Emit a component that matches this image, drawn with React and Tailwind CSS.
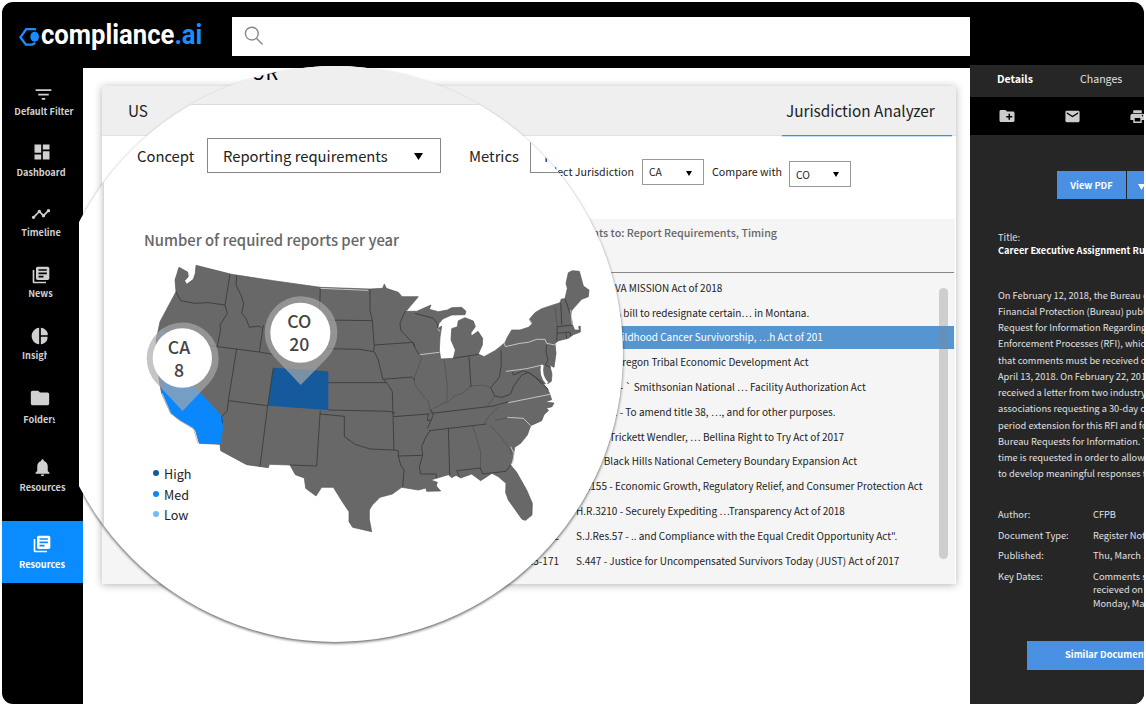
import React from "react";
import {
  MdFilterList, MdDashboard, MdTimeline, MdLibraryBooks, MdPieChart, MdFolder,
  MdNotifications, MdCreateNewFolder, MdEmail, MdPrint,
} from "react-icons/md";

const NAV = [
  { Icon: MdFilterList, label: "Default Filter", box: "h-[58px] pl-[3px]", text: "-mt-[0.5px]", icon: "pr-[2px]", size: 21 },
  { Icon: MdDashboard, label: "Dashboard", box: "h-[62px] pr-[3px]", text: "mt-[3px]", icon: "pl-[2px]", size: 20 },
  { Icon: MdTimeline, label: "Timeline", box: "h-[61px] pr-[3px]", text: "mt-[1px]", icon: "", size: 20 },
  { Icon: MdLibraryBooks, label: "News", box: "h-[61px] pr-[4px]", text: "mt-[1px]", icon: "", size: 20 },
  { Icon: MdPieChart, label: "Insights", box: "h-[62px] pr-[5px]", text: "mt-[2px]", icon: "", size: 20 },
  { Icon: MdFolder, label: "Folders", box: "h-[69px] pr-[5px]", text: "mt-[4px]", icon: "", size: 22 },
  { Icon: MdNotifications, label: "Resources", box: "h-[64px]", text: "mt-[3px]", icon: "", size: 21 },
];

const ROWS = [
  ["", "S.2372 - VA MISSION Act of 2018"],
  ["", "S.1117 - A bill to redesignate certain… in Montana."],
  ["", "S.292 - Childhood Cancer Survivorship, …h Act of 201"],
  ["", "S.1285 - Oregon Tribal Economic Development Act"],
  ["", "H.R.4009 - ` Smithsonian National … Facility Authorization Act"],
  ["", "H.R.3562 - To amend title 38, …, and for other purposes."],
  ["", "S.204 - Trickett Wendler, … Bellina Right to Try Act of 2017"],
  ["", "S.35 - Black Hills National Cemetery Boundary Expansion Act"],
  ["", "S.2155 - Economic Growth, Regulatory Relief, and Consumer Protection Act"],
  ["", "H.R.3210 - Securely Expediting …Transparency Act of 2018"],
  ["115-172", "S.J.Res.57 - .. and Compliance with the Equal Credit Opportunity Act\"."],
  ["115-171", "S.447 - Justice for Uncompensated Survivors Today (JUST) Act of 2017"],
];

const SUMMARY = [
  "On February 12, 2018, the Bureau of",
  "Financial Protection (Bureau) published",
  "Request for Information Regarding",
  "Enforcement Processes (RFI), which",
  "that comments must be received on",
  "April 13, 2018. On February 22, 2018",
  "received a letter from two industry",
  "associations requesting a 30-day comment",
  "period extension for this RFI and for",
  "Bureau Requests for Information. The",
  "time is requested in order to allow",
  "to develop meaningful responses to",
];

const COUNTRY =
  "M117 52 L143 66 L145 80 L134 92 L140 103 L160 88 L166 70 L168 46 L275 73 L400 92 L541 112 L690 117 L728 115 L733 102 L739 115 L775 127 L786 140 L835 140 L798 184 L830 184 L873 165 L868 178 L895 185 L922 180 L935 173 L965 172 L978 184 L975 194 L935 195 L908 207 L896 222 L893 236 L905 228 L900 262 L898 300 L902 327 L940 325 L946 300 L933 270 L935 236 L952 230 L955 212 L975 203 L1000 213 L1006 230 L993 248 L994 258 L1014 244 L1028 265 L1027 285 L1015 312 L1032 320 L1065 302 L1095 278 L1102 262 L1115 240 L1140 240 L1165 232 L1176 222 L1168 208 L1185 188 L1205 176 L1260 158 L1264 147 L1275 146 L1282 115 L1278 100 L1285 68 L1297 62 L1318 64 L1330 108 L1347 120 L1345 140 L1325 148 L1296 180 L1292 195 L1298 225 L1304 240 L1318 240 L1316 229 L1321 229 L1321 246 L1300 254 L1285 265 L1256 272 L1245 280 L1248 310 L1242 352 L1229 345 L1236 372 L1234 394 L1226 400 L1208 402 L1222 414 L1230 434 L1235 449 L1215 456 L1242 459 L1236 470 L1218 475 L1226 481 L1212 494 L1205 512 L1172 527 L1162 555 L1142 580 L1124 592 L1119 625 L1112 645 L1130 667 L1160 720 L1177 760 L1176 795 L1157 811 L1146 808 L1132 788 L1105 750 L1097 728 L1098 700 L1075 680 L1056 670 L1022 692 L995 672 L962 684 L948 676 L935 683 L925 674 L872 690 L892 697 L889 708 L902 723 L860 724 L858 714 L835 720 L785 712 L757 732 L720 742 L697 765 L688 780 L688 808 L695 845 L638 832 L627 815 L627 785 L608 757 L580 712 L545 712 L528 738 L497 715 L493 684 L466 674 L450 645 L388 643 L385 653 L320 644 L242 602 L240 583 L178 580 L166 540 L120 510 L92 490 L65 430 L58 395 L50 300 L48 270 L55 240 L60 215 L108 125 L105 90 Z";

const BORDERS = [
  "M108 125 L122 152 L165 160 L205 158 L255 165 L270 73",
  "M255 165 L262 190 L240 225 L242 238 L232 290 L200 284 M232 290 L358 306 L370 225",
  "M290 76 L288 105 L305 140 L311 162 L305 190 L318 205 L328 232 L358 228 L365 235",
  "M290 296 L265 452 L262 482 L245 500 L248 520",
  "M265 452 L383 467 L360 650 M383 467 L400 353 M358 306 L400 313",
  "M565 480 L750 484 L765 490 M541 482 L540 492 L530 648 L450 645 M540 492 L613 499 L613 560 L645 583 L690 597 L715 598 L762 600 L775 602",
  "M541 112 L535 290 M690 117 L690 180 L697 212 L560 210 M697 212 L703 290 L700 305 L660 298 L560 296",
  "M703 285 L820 277 L823 290 M703 305 L715 330 L728 385 L745 405 L757 425 L762 600",
  "M565 398 L740 398 M728 388 L815 381 L825 390",
  "M796 184 L790 195 L780 220 L782 240 L800 260 L820 280 L827 298 L837 312",
  "M825 190 L880 205 L893 222 L893 235",
  "M872 478 L880 495 L862 535 M760 500 L865 492 L862 512 L875 510",
  "M872 540 L858 560 L845 590 L848 615 L838 650 L842 672 L888 672 L890 684",
  "M775 602 L775 618 L847 616 M775 618 L782 645 L792 660 L788 712",
  "M868 542 L1040 522 M925 533 L929 675 M1021 654 L950 662 L958 680",
  "M1021 654 L1028 672 L1098 664 L1112 645",
  "M940 325 L1015 313 M987 320 L993 410",
  "M1052 413 L1078 382 L1084 345 L1083 300",
  "M1052 413 L1064 438 L1085 442 L1112 432 L1120 410 L1145 375 L1165 367 L1190 385 L1205 402",
  "M1118 366 L1120 375 L1150 362 L1170 370 L1205 395 L1224 420",
  "M875 490 L1060 468 L1078 463 L1105 455",
  "M1220 285 L1218 305 L1224 330 L1216 345 L1232 352 M1262 158 L1264 190 L1265 225 M1275 146 L1292 195 M1252 230 L1298 225 M1252 250 L1290 246 L1292 258 M1278 250 L1280 265 M1252 230 L1250 272",
];

const FAINT = [
  "M822 385 L825 405 L845 432 L865 455 L872 488 L860 492 M837 312 L845 325 L822 385",
  "M912 328 L922 405 L920 455 L880 476 M920 460 L940 440 L970 428 L993 408 L1030 405 L1052 413",
  "M998 528 L1022 605 L1021 654 M1050 525 L1078 555 L1110 598 L1115 612",
  "M1064 438 L1042 468 M1032 520 L1050 495 L1078 470 M1115 500 L1065 512 M1245 170 L1252 230",
];

const LIGHT = [
  "M541 115 L610 118 L685 121",
  "M66 430 L92 490 L118 512 L160 535 L174 580",
  "M840 314 L898 307",
  "M1093 280 L1096 290 L1140 280 L1165 277 L1190 268 L1215 268 L1220 280 L1250 286",
  "M1098 364 L1160 356 L1207 345 M1105 458 L1230 433 M1102 502 L1150 505 L1172 527 M1176 222 L1168 208 M1292 180 L1297 225 M1112 590 L1122 610 L1118 640 M893 236 L900 245",
];

function UsMap() {
  return (
    <svg viewBox="0 0 1440 870" className="h-[290px] w-[480px]">
      <path d={COUNTRY} fill="#686868" stroke="#555" strokeWidth="2" strokeLinejoin="round" />
      <path d="M60 240 L78 243 L55 275 L52 262 Z" fill="#4a86c4" />
      <path d="M62 390 L150 400 L185 432 L250 503 L250 530 L242 583 L178 580 L166 540 L120 510 L92 490 L66 430 Z" fill="#0a87fb" />
      <path d="M400 353 L565 364 L565 480 L383 467 Z" fill="#145a9c" />
      {FAINT.map((d) => (
        <path key={d} d={d} fill="none" stroke="#505050" strokeWidth="2.2" strokeLinejoin="round" />
      ))}
      {BORDERS.map((d) => (
        <path key={d} d={d} fill="none" stroke="#3a3a3a" strokeWidth="2.6" strokeLinejoin="round" />
      ))}
      {LIGHT.map((d) => (
        <path key={d} d={d} fill="none" stroke="#c4c4c4" strokeWidth="3" strokeLinejoin="round" />
      ))}
      <path d="M1207 345 Q1200 378 1222 400" fill="none" stroke="#fff" strokeWidth="8" />
      <g fill="#aaaaaa" fillOpacity="0.68">
        <path d="M128 483 L50 400 A108 108 0 1 1 208 398 Z" />
        <path d="M482 405 L406 325 A109 109 0 1 1 562 323 Z" />
      </g>
      <circle cx="127" cy="324" r="89" fill="#fff" />
      <circle cx="481" cy="248" r="90" fill="#fff" />
      <g fontSize="53" fontWeight="500" fill="#444" textAnchor="middle">
        <text x="117" y="311">CA</text>
        <text x="117" y="382">8</text>
        <text x="478" y="233">CO</text>
        <text x="478" y="304">20</text>
      </g>
    </svg>
  );
}

function Caret({ className }) {
  return (
    <svg viewBox="0 0 8 7" preserveAspectRatio="none" className={className} fill="currentColor">
      <path d="M0 0H8L4 7Z" />
    </svg>
  );
}

function Lens() {
  return (
    <>
      <div className="absolute left-[45px] top-[64px] h-[576px] w-[33px] overflow-hidden">
        <div className="size-[576px] rounded-full bg-black" />
      </div>
      <div className="absolute left-[45px] top-[64px] flex h-[576px] w-[576px] overflow-hidden rounded-full bg-white shadow-[0_1.5px_3px_rgba(0,0,0,0.6)] [clip-path:inset(-6px_-6px_-6px_32px)]">
        <div className="w-[32px] shrink-0" />
        <div className="w-[544px] shrink-0 pl-[25px]">
          <div className="h-[576px] w-[519px] shadow-[0_0_7px_rgba(0,0,0,0.35)]">
            <div className="h-[39px] border-b border-[#d9dce4] bg-[#efefef] pl-[147px] pt-[6px]">
              <div className="flex h-[9px] items-end overflow-hidden">
                <span className="text-[20px] leading-[18px]">UR</span>
              </div>
            </div>
            <div className="flex items-center pl-[33px] pt-[33px] text-[14.8px] leading-[18px] text-[#222]">
              <span className="w-[70px] shrink-0">Concept</span>
              <div className="flex h-[35px] w-[234px] shrink-0 items-center justify-between border border-[#888] pl-[15px] pr-[17px]">
                <span className="whitespace-nowrap">Reporting requirements</span>
                <Caret className="mt-[2px] h-[7px] w-[9px] text-black" />
              </div>
              <span className="ml-[28px] w-[61px] shrink-0">Metrics</span>
              <div className="flex h-[35px] w-[120px] shrink-0 items-center border border-[#888] pl-[13px]">Number</div>
            </div>
            <div className="pl-[40px] pt-[57px] text-[14.8px] font-medium leading-[20px] text-[#666]">
              Number of required reports per year
            </div>
            <div className="h-[290px] pl-[36px]">
              <UsMap />
            </div>
          </div>
        </div>
        <ul className="absolute left-[106px] top-[398px] flex flex-col text-[12.6px] leading-[20.5px] text-[#222]">
          <li className="flex items-center gap-[5px]"><span className="mb-[2px] size-[6px] rounded-full bg-[#145a9c]" />High</li>
          <li className="flex items-center gap-[5px]"><span className="mb-[2px] size-[6px] rounded-full bg-[#0a87fb]" />Med</li>
          <li className="flex items-center gap-[5px]"><span className="mb-[2px] size-[6px] rounded-full bg-[#74b9f5]" />Low</li>
        </ul>
      </div>
    </>
  );
}

function Card() {
  return (
    <section className="flex h-[498px] w-[854px] flex-col bg-white shadow-[0_1px_8px_rgba(0,0,0,0.3)]">
      <div className="flex h-[50px] shrink-0 justify-between border-b border-[#e2e2e2] bg-[#efefef] pl-[26px] pr-[4px] text-[15.3px] leading-[48px] text-[#222]">
        <span>US</span>
        <div className="flex h-[50px] w-[170px] flex-col justify-between whitespace-nowrap">
          <span className="h-[49px] pl-[4px]">Jurisdiction Analyzer</span>
          <div className="h-px shrink-0 bg-[#4390d0] shadow-[0_1px_0_#c3e0fa]" />
        </div>
      </div>
      <div className="flex h-[83px] shrink-0 items-start pl-[428px] pt-[22px] text-[10.7px] leading-[28px] text-[#222]">
        <span className="w-[104px] whitespace-nowrap text-right">Select Jurisdiction</span>
        <div className="ml-[8px] mt-[1px] flex h-[26px] w-[62px] items-center justify-between border border-[#999] pl-[6px] pr-[11px] text-[10.3px]">
          CA<Caret className="mt-[2px] h-[5px] w-[6px] text-black" />
        </div>
        <span className="ml-[8px] w-[77px] whitespace-nowrap">Compare with</span>
        <div className="mt-[3px] flex h-[26px] w-[62px] items-center justify-between border border-[#999] pl-[6px] pr-[11px] text-[10.3px] leading-[25px]">
          CO<Caret className="h-[5px] w-[6px] text-black" />
        </div>
      </div>
      <div className="mr-[1px] flex flex-1 flex-col bg-[#f5f5f5] pl-[418px]">
        <div className="mr-[1px] h-[54px] border-b border-[#888] pl-[7px] pt-[6px] text-[10.7px] font-medium leading-[16px] text-[#666]">
          <span className="block w-[250px] whitespace-nowrap text-right">Amendments to: Report Requirements, Timing</span>
        </div>
        <div className="relative mr-[1px] pt-[3px] text-[10px] text-[#222]">
          {ROWS.map(([law, title], i) => (
            <div key={title} className="flex h-[24.8px] items-center">
              <div className={i === 2 ? "flex h-[23px] w-full items-center bg-[#5596d1] pb-[1px] text-white" : "flex h-[23px] w-full items-center pb-[1px]"}>
                <span className="w-[39px] shrink-0 whitespace-nowrap text-right">{law}</span>
                <span className="ml-[17px] whitespace-pre leading-[16px]">{title}</span>
              </div>
            </div>
          ))}
          <div className="absolute right-[6px] top-[15px] h-[271px] w-[9px] rounded-full bg-[#888]/35" />
        </div>
      </div>
    </section>
  );
}

function Details() {
  return (
    <aside className="w-[174px] shrink-0 overflow-hidden bg-[#262626] text-[#e0e0e0]">
      <div className="flex h-[32px] items-center whitespace-nowrap pb-[4px] pl-[27px] text-[10.6px] leading-[16px]">
        <span className="w-[83px] font-bold text-white">Details</span>
        <span>Changes</span>
      </div>
      <div className="flex h-[38px] w-[200px] items-center bg-black pl-[28px] text-[#ccc]">
        <MdCreateNewFolder size={18} className="shrink-0" />
        <MdEmail size={17} className="ml-[48px] shrink-0" />
        <MdPrint size={17} className="ml-[48px] shrink-0" />
      </div>
      <div className="mt-[36px] flex h-[28px] w-[200px] pl-[87px] text-[9.3px] font-bold leading-[28px] text-white">
        <span className="w-[69px] bg-[#4a90e2] text-center">View PDF</span>
        <span className="ml-[1px] flex w-[40px] items-center bg-[#4a90e2] pl-[11px] pt-[3px]">
          <Caret className="h-[6px] w-[7px]" />
        </span>
      </div>
      <div className="mt-[32px] whitespace-nowrap pl-[28px] text-[9.3px] leading-[13px]">
        <div>Title:</div>
        <div className="font-bold text-white">Career Executive Assignment Rule</div>
      </div>
      <div className="mt-[29.5px] whitespace-nowrap pl-[28px] text-[9.25px] leading-[16.27px]">
        {SUMMARY.map((line) => (
          <div key={line}>{line}</div>
        ))}
      </div>
      <dl className="mt-[26.5px] grid w-[260px] grid-cols-[95px_1fr] gap-y-[7px] whitespace-nowrap pl-[28px] text-[9.25px] leading-[13.5px]">
        <dt>Author:</dt><dd>CFPB</dd>
        <dt>Document Type:</dt><dd>Register Notice</dd>
        <dt>Published:</dt><dd>Thu, March 15</dd>
        <dt>Key Dates:</dt><dd>Comments should<br />recieved on or<br />Monday, May</dd>
      </dl>
      <div className="ml-[57px] mt-[31px] h-[29px] w-[160px] whitespace-nowrap bg-[#4a90e2] pl-[38px] text-[9.3px] font-bold leading-[27px] text-white">
        Similar Documents
      </div>
    </aside>
  );
}

export default function App() {
  return (
    <div className="h-[706px] w-[1146px] overflow-hidden bg-white p-[2px] font-['Noto_Sans_CJK_SC',sans-serif]">
      <div className="relative flex h-[702px] w-[1142px] flex-col overflow-hidden rounded-[11px] bg-black">
        <header className="flex h-[63px] shrink-0 items-start">
          <div className="flex w-[230px] items-center pl-[16px] pt-[18px]">
            <svg viewBox="0 0 66 54" className="mt-[3px] h-[18px] w-[22px] shrink-0" fill="none">
              <path d="M54 5 L47 3 H25 L7 28 L24 50 H42 L52 45" stroke="#1a8cff" strokeWidth="7" strokeLinejoin="round" />
              <ellipse cx="50" cy="26" rx="13" ry="15" fill="#1a8cff" />
            </svg>
            <div className="ml-[1px] origin-left scale-x-[0.95] whitespace-nowrap font-['Roboto',sans-serif] text-[27px] font-bold leading-[30px] text-white">
              compliance<span className="text-[#1a8cff]">.ai</span>
            </div>
          </div>
          <div className="mt-[15px] flex h-[39px] w-[738px] items-center bg-white pb-[2px] pl-[12px]">
            <svg viewBox="0 0 20 20" className="size-[20px]" fill="none" stroke="#888" strokeWidth="1.4">
              <circle cx="7.8" cy="7.6" r="6.4" />
              <path d="M12.4 12.2L18.6 18.4" />
            </svg>
          </div>
        </header>
        <div className="flex flex-1">
          <nav className="flex w-[81px] shrink-0 flex-col pt-[19px] text-[#d0d0d0]">
            {NAV.map(({ Icon, label, box, text, icon, size }) => (
              <div key={label} className={"flex shrink-0 flex-col items-center " + box}>
                <div className={"flex h-[20px] items-center " + icon}><Icon size={size} /></div>
                <span className={"whitespace-nowrap text-[9.2px] font-bold leading-[14px] " + text}>{label}</span>
              </div>
            ))}
            <div className="flex h-[62px] shrink-0 flex-col items-center bg-[#0a8cff] pr-[1px] pt-[13px] text-white">
              <MdLibraryBooks size={20} />
              <span className="mt-[3px] text-[9.2px] font-bold leading-[14px]">Resources</span>
            </div>
          </nav>
          <main className="mt-[3px] w-[887px] shrink-0 bg-white pl-[19px] pt-[18px]">
            <Card />
          </main>
          <Details />
        </div>
        <Lens />
      </div>
    </div>
  );
}
